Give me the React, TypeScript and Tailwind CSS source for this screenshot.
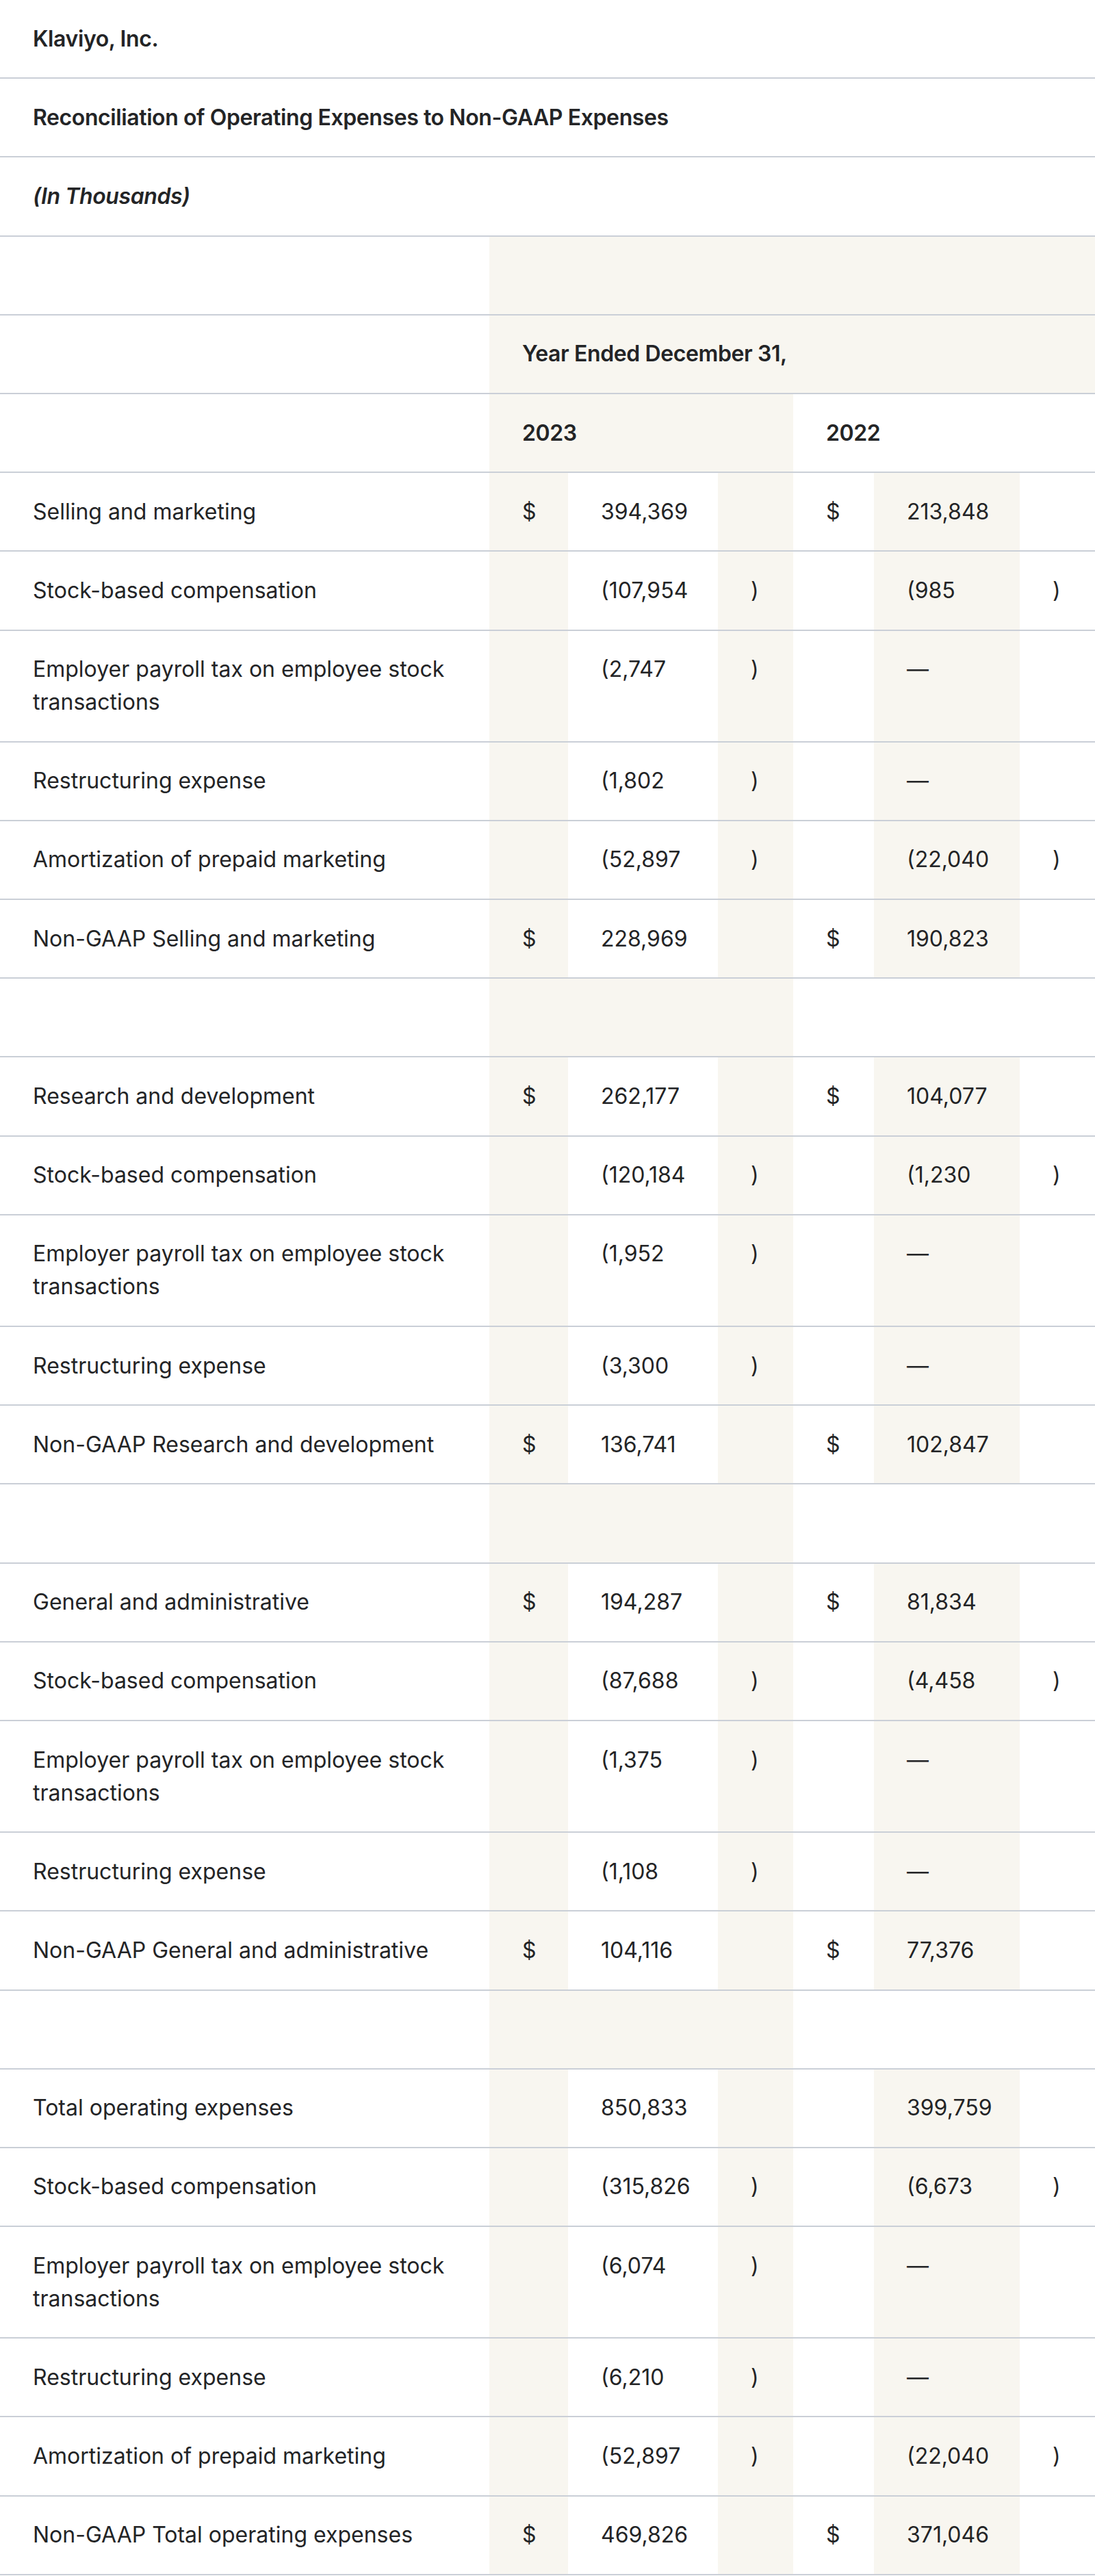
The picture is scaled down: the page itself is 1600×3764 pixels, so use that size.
import React from "react";

type Row =
  | { kind: "data"; label: string; d1?: boolean; v1: string; p1?: boolean; d2?: boolean; v2: string; p2?: boolean }
  | { kind: "empty" };

const rows: Row[] = [
  { kind: "data", label: "Selling and marketing", d1: true, v1: "394,369", d2: true, v2: "213,848" },
  { kind: "data", label: "Stock-based compensation", v1: "(107,954", p1: true, v2: "(985", p2: true },
  { kind: "data", label: "Employer payroll tax on employee stock transactions", v1: "(2,747", p1: true, v2: "—" },
  { kind: "data", label: "Restructuring expense", v1: "(1,802", p1: true, v2: "—" },
  { kind: "data", label: "Amortization of prepaid marketing", v1: "(52,897", p1: true, v2: "(22,040", p2: true },
  { kind: "data", label: "Non-GAAP Selling and marketing", d1: true, v1: "228,969", d2: true, v2: "190,823" },
  { kind: "empty" },
  { kind: "data", label: "Research and development", d1: true, v1: "262,177", d2: true, v2: "104,077" },
  { kind: "data", label: "Stock-based compensation", v1: "(120,184", p1: true, v2: "(1,230", p2: true },
  { kind: "data", label: "Employer payroll tax on employee stock transactions", v1: "(1,952", p1: true, v2: "—" },
  { kind: "data", label: "Restructuring expense", v1: "(3,300", p1: true, v2: "—" },
  { kind: "data", label: "Non-GAAP Research and development", d1: true, v1: "136,741", d2: true, v2: "102,847" },
  { kind: "empty" },
  { kind: "data", label: "General and administrative", d1: true, v1: "194,287", d2: true, v2: "81,834" },
  { kind: "data", label: "Stock-based compensation", v1: "(87,688", p1: true, v2: "(4,458", p2: true },
  { kind: "data", label: "Employer payroll tax on employee stock transactions", v1: "(1,375", p1: true, v2: "—" },
  { kind: "data", label: "Restructuring expense", v1: "(1,108", p1: true, v2: "—" },
  { kind: "data", label: "Non-GAAP General and administrative", d1: true, v1: "104,116", d2: true, v2: "77,376" },
  { kind: "empty" },
  { kind: "data", label: "Total operating expenses", v1: "850,833", v2: "399,759" },
  { kind: "data", label: "Stock-based compensation", v1: "(315,826", p1: true, v2: "(6,673", p2: true },
  { kind: "data", label: "Employer payroll tax on employee stock transactions", v1: "(6,074", p1: true, v2: "—" },
  { kind: "data", label: "Restructuring expense", v1: "(6,210", p1: true, v2: "—" },
  { kind: "data", label: "Amortization of prepaid marketing", v1: "(52,897", p1: true, v2: "(22,040", p2: true },
  { kind: "data", label: "Non-GAAP Total operating expenses", d1: true, v1: "469,826", d2: true, v2: "371,046" },
];

const cell = "align-top pl-[48px] py-[32.6px] border-b-2 border-[#cacfd7] leading-[48px]";
const beige = "bg-[#f8f6f0]";

export default function App() {
  return (
    <div
      className="w-[1600px] bg-white text-[#232426] text-[32px] leading-[48px]"
      style={{ fontFamily: "Inter, 'Noto Sans', 'Liberation Sans', sans-serif" }}
    >
      <table className="w-[1600px] table-fixed border-collapse">
        <colgroup>
          <col className="w-[715px]" />
          <col className="w-[115px]" />
          <col className="w-[219px]" />
          <col className="w-[110px]" />
          <col className="w-[118px]" />
          <col className="w-[213px]" />
          <col className="w-[110px]" />
        </colgroup>
        <tbody>
          <tr>
            <td colSpan={7} className={`${cell} font-semibold tracking-[-0.4px]`}>
              Klaviyo, Inc.
            </td>
          </tr>
          <tr>
            <td colSpan={7} className={`${cell} font-semibold tracking-[-0.4px]`}>
              Reconciliation of Operating Expenses to Non-GAAP Expenses
            </td>
          </tr>
          <tr>
            <td colSpan={7} className={`${cell} font-semibold italic tracking-[-0.4px]`}>
              (In Thousands)
            </td>
          </tr>
          <tr>
            <td className={`${cell}`}>&nbsp;</td>
            <td colSpan={6} className={`${cell} ${beige}`}>&nbsp;</td>
          </tr>
          <tr>
            <td className={`${cell}`}>&nbsp;</td>
            <td colSpan={6} className={`${cell} ${beige} font-semibold tracking-[-0.4px]`}>
              Year Ended December 31,
            </td>
          </tr>
          <tr>
            <td className={`${cell}`}>&nbsp;</td>
            <td colSpan={3} className={`${cell} ${beige} font-semibold tracking-[-0.4px]`}>
              2023
            </td>
            <td colSpan={3} className={`${cell} font-semibold tracking-[-0.4px]`}>
              2022
            </td>
          </tr>
          {rows.map((r, i) =>
            r.kind === "empty" ? (
              <tr key={i}>
                <td className={`${cell}`}>&nbsp;</td>
                <td colSpan={3} className={`${cell} ${beige}`}>&nbsp;</td>
                <td colSpan={3} className={`${cell}`}>&nbsp;</td>
              </tr>
            ) : (
              <tr key={i}>
                <td className={`${cell} pr-[48px]`}>{r.label}</td>
                <td className={`${cell} ${beige} whitespace-nowrap`}>{r.d1 ? "$" : ""}</td>
                <td className={`${cell} whitespace-nowrap`}>{r.v1}</td>
                <td className={`${cell} ${beige} whitespace-nowrap`}>{r.p1 ? ")" : ""}</td>
                <td className={`${cell} whitespace-nowrap`}>{r.d2 ? "$" : ""}</td>
                <td className={`${cell} ${beige} whitespace-nowrap`}>{r.v2}</td>
                <td className={`${cell} whitespace-nowrap`}>{r.p2 ? ")" : ""}</td>
              </tr>
            )
          )}
        </tbody>
      </table>
    </div>
  );
}
